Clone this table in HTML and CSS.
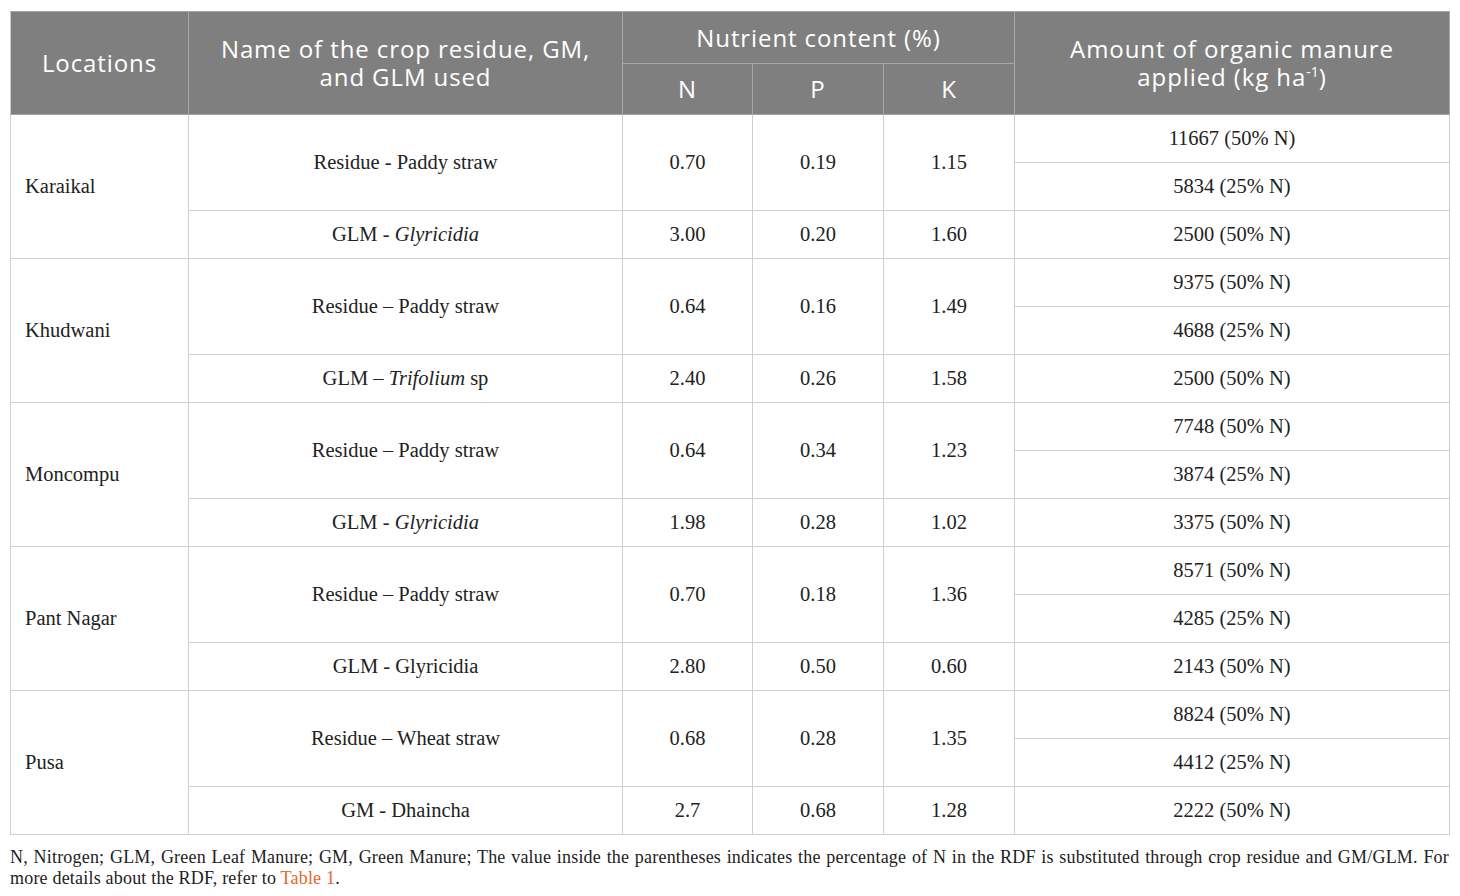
FILE: index.html
```html
<!DOCTYPE html>
<html lang="en">
<head>
    <meta charset="UTF-8">
    <title>Organic manure applied</title>
    <link rel="stylesheet" href="styles.css">
</head>
<body>

<div class="wrap">
    <table class="data">
        <colgroup>
            <col class="c-loc">
            <col class="c-name">
            <col class="c-n1">
            <col class="c-n">
            <col class="c-n">
            <col class="c-amt">
        </colgroup>
        <thead>
            <tr class="h1">
                <th rowspan="2">Locations</th>
                <th rowspan="2">Name of the crop residue, GM,<br>and GLM used</th>
                <th colspan="3">Nutrient content (%)</th>
                <th rowspan="2">Amount of organic manure<br>applied (kg ha<sup>-1</sup>)</th>
            </tr>
            <tr class="h2">
                <th>N</th>
                <th>P</th>
                <th>K</th>
            </tr>
        </thead>
        <tbody>
            <tr>
                <td rowspan="3" class="loc">Karaikal</td>
                <td rowspan="2">Residue - Paddy straw</td>
                <td rowspan="2">0.70</td>
                <td rowspan="2">0.19</td>
                <td rowspan="2">1.15</td>
                <td>11667 (50% N)</td>
            </tr>
            <tr><td>5834 (25% N)</td></tr>
            <tr>
                <td>GLM - <i>Glyricidia</i></td>
                <td>3.00</td><td>0.20</td><td>1.60</td>
                <td>2500 (50% N)</td>
            </tr>

            <tr>
                <td rowspan="3" class="loc">Khudwani</td>
                <td rowspan="2">Residue – Paddy straw</td>
                <td rowspan="2">0.64</td>
                <td rowspan="2">0.16</td>
                <td rowspan="2">1.49</td>
                <td>9375 (50% N)</td>
            </tr>
            <tr><td>4688 (25% N)</td></tr>
            <tr>
                <td>GLM – <i>Trifolium</i> sp</td>
                <td>2.40</td><td>0.26</td><td>1.58</td>
                <td>2500 (50% N)</td>
            </tr>

            <tr>
                <td rowspan="3" class="loc">Moncompu</td>
                <td rowspan="2">Residue – Paddy straw</td>
                <td rowspan="2">0.64</td>
                <td rowspan="2">0.34</td>
                <td rowspan="2">1.23</td>
                <td>7748 (50% N)</td>
            </tr>
            <tr><td>3874 (25% N)</td></tr>
            <tr>
                <td>GLM - <i>Glyricidia</i></td>
                <td>1.98</td><td>0.28</td><td>1.02</td>
                <td>3375 (50% N)</td>
            </tr>

            <tr>
                <td rowspan="3" class="loc">Pant Nagar</td>
                <td rowspan="2">Residue – Paddy straw</td>
                <td rowspan="2">0.70</td>
                <td rowspan="2">0.18</td>
                <td rowspan="2">1.36</td>
                <td>8571 (50% N)</td>
            </tr>
            <tr><td>4285 (25% N)</td></tr>
            <tr>
                <td>GLM - Glyricidia</td>
                <td>2.80</td><td>0.50</td><td>0.60</td>
                <td>2143 (50% N)</td>
            </tr>

            <tr>
                <td rowspan="3" class="loc">Pusa</td>
                <td rowspan="2">Residue – Wheat straw</td>
                <td rowspan="2">0.68</td>
                <td rowspan="2">0.28</td>
                <td rowspan="2">1.35</td>
                <td>8824 (50% N)</td>
            </tr>
            <tr><td>4412 (25% N)</td></tr>
            <tr>
                <td>GM - Dhaincha</td>
                <td>2.7</td><td>0.68</td><td>1.28</td>
                <td>2222 (50% N)</td>
            </tr>
        </tbody>
    </table>

    <p class="note">N, Nitrogen; GLM, Green Leaf Manure; GM, Green Manure; The value inside the parentheses indicates the percentage of N in the RDF is substituted through crop residue and GM/GLM. For more details about the RDF, refer to <a href="#">Table 1</a>.</p>
</div>

</body>
</html>
```

FILE: styles.css
```css
body {
    margin: 0;
    background: #fff;
    font-family: "Liberation Serif", "Times New Roman", serif;
    color: #222;
}
.wrap {
    width: 1439px;
    padding: 11px 0 0 10px;
}
.data {
    width: 1439px;
    border-collapse: collapse;
    table-layout: fixed;
}
.c-loc { width: 178px; }
.c-name { width: 434px; }
.c-n1 { width: 130px; }
.c-n { width: 131px; }
.c-amt { width: 435px; }
.data th {
    background: #7f7f7f;
    color: #fff;
    font-family: "Open Sans", "Noto Sans", sans-serif;
    font-weight: normal;
    font-size: 24px;
    letter-spacing: 0.9px;
    line-height: 28px;
    border: 1px solid #a6a6a6;
    padding: 0 8px;
    text-align: center;
}
.data .h1 th { height: 51px; }
.data .h2 th { height: 50px; }
.data th:first-child { border-left-color: #ccc; }
.data sup {
    font-size: 14px;
    line-height: 0;
    letter-spacing: 0;
}
.data td {
    border: 1px solid #d0d0d0;
    height: 47px;
    padding: 0 8px;
    text-align: center;
    font-size: 20.5px;
}
.data td.loc {
    text-align: left;
    padding-left: 14px;
}
.note {
    margin: 12px 0 0;
    font-size: 18px;
    line-height: 21px;
    letter-spacing: 0.2px;
    text-align: justify;
}
.note a {
    color: #e0692a;
    text-decoration: none;
}
```
